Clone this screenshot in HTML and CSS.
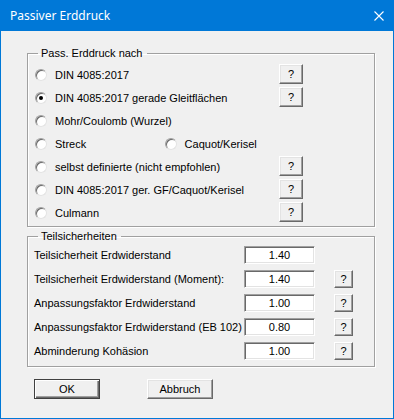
FILE: index.html
```html
<!DOCTYPE html>
<html lang="de">
<head>
<meta charset="utf-8">
<title>Passiver Erddruck</title>
<link rel="stylesheet" href="styles.css">
</head>
<body>
<div class="window">
  <div class="titlebar">
    <span class="title">Passiver Erddruck</span>
    <svg class="close" width="10" height="10" viewBox="0 0 10 10"><path d="M0.5 0.5L9.5 9.5M9.5 0.5L0.5 9.5" stroke="#fff" stroke-width="1.1" fill="none"/></svg>
  </div>
  <div class="client">
    <fieldset class="group g1">
      <legend class="legend">Pass. Erddruck nach</legend>
      <div class="row"><span class="opt"><span class="radio"></span>DIN 4085:2017</span><span class="btn q">?</span></div>
      <div class="row"><span class="opt"><span class="radio on"></span>DIN 4085:2017 gerade Gleitflächen</span><span class="btn q">?</span></div>
      <div class="row"><span class="opt"><span class="radio"></span>Mohr/Coulomb (Wurzel)</span></div>
      <div class="row"><span class="opt half"><span class="radio"></span>Streck</span><span class="opt"><span class="radio"></span>Caquot/Kerisel</span></div>
      <div class="row"><span class="opt"><span class="radio"></span>selbst definierte (nicht empfohlen)</span><span class="btn q">?</span></div>
      <div class="row"><span class="opt"><span class="radio"></span>DIN 4085:2017 ger. GF/Caquot/Kerisel</span><span class="btn q">?</span></div>
      <div class="row"><span class="opt"><span class="radio"></span>Culmann</span><span class="btn q">?</span></div>
    </fieldset>
    <fieldset class="group g2">
      <legend class="legend">Teilsicherheiten</legend>
      <div class="frow"><span class="lbl">Teilsicherheit Erdwiderstand</span><span class="field">1.40</span></div>
      <div class="frow"><span class="lbl">Teilsicherheit Erdwiderstand (Moment):</span><span class="field">1.40</span><span class="btn q2">?</span></div>
      <div class="frow"><span class="lbl">Anpassungsfaktor Erdwiderstand</span><span class="field">1.00</span><span class="btn q2">?</span></div>
      <div class="frow"><span class="lbl">Anpassungsfaktor Erdwiderstand (EB 102)</span><span class="field">0.80</span><span class="btn q2">?</span></div>
      <div class="frow"><span class="lbl">Abminderung Kohäsion</span><span class="field">1.00</span><span class="btn q2">?</span></div>
    </fieldset>
    <div class="actions">
      <span class="btn big default">OK</span>
      <span class="btn big">Abbruch</span>
    </div>
  </div>
</div>
</body>
</html>
```
FILE: styles.css
```css
* { box-sizing: border-box; }
html, body { margin: 0; padding: 0; background: #f0f0f0; }
body {
  font-family: "Liberation Sans", Arial, sans-serif;
  font-size: 11px;
  color: #000;
}
.window {
  width: 394px;
  height: 419px;
  border: 1px solid #0078d7;
  border-top: none;
  background: #f0f0f0;
  display: flex;
  flex-direction: column;
}
.titlebar {
  height: 31px;
  background: #0078d7;
  margin: 0 -1px;
  padding: 0 10px 0 10px;
  display: flex;
  align-items: center;
  justify-content: space-between;
}
.title {
  color: #fff;
  font-family: "Noto Sans", "Open Sans", sans-serif;
  font-size: 12px;
  margin-top: -1px;
}
.close { display: block; margin-top: 0; }
.client {
  padding: 16px 0 0 26px;
  display: flex;
  flex-direction: column;
}
.group {
  width: 348px;
  margin: 0;
  border: 1px solid #a0a0a0;
  box-shadow: inset 1px 1px #fff, 1px 1px #fff;
  min-width: 0;
}
.legend {
  padding: 0 4px 0 3px;
  line-height: 13px;
  height: 13px;
}
.g1 { padding: 3px 0 2px 7px; }
.g1 .legend { margin-left: 3px; }
.g2 { padding: 0 0 3px 6px; margin-top: 3px; }
.g2 .legend { margin-left: 4px; }
.row {
  height: 23px;
  display: flex;
  align-items: center;
}
.opt {
  display: flex;
  align-items: center;
  width: 244px;
}
.opt.half { width: 151px; }
.radio {
  width: 12px;
  height: 12px;
  border-radius: 50%;
  background: #fff;
  border: 1px solid;
  border-color: #a0a0a0 #e3e3e3 #e3e3e3 #a0a0a0;
  box-shadow: inset 1px 1px #696969;
  margin-right: 8px;
  position: relative;
  flex: none;
}
.radio.on::after {
  content: "";
  position: absolute;
  left: 3px;
  top: 3px;
  width: 4px;
  height: 4px;
  border-radius: 50%;
  background: #000;
}
.btn {
  display: flex;
  align-items: center;
  justify-content: center;
  background: #f0f0f0;
  border: 1px solid;
  border-color: #fff #696969 #696969 #fff;
  box-shadow: inset -1px -1px #a0a0a0, inset 1px 1px #e3e3e3;
  flex: none;
}
.q { width: 24px; height: 20px; margin-top: -1px; }
.frow {
  height: 24px;
  display: flex;
  align-items: center;
}
.lbl { width: 210px; }
.field {
  width: 71px;
  height: 18px;
  background: #fff;
  border: 1px solid;
  border-color: #a0a0a0 #fff #fff #a0a0a0;
  box-shadow: inset 1px 1px #696969, inset -1px -1px #e3e3e3;
  display: flex;
  align-items: center;
  justify-content: center;
}
.q2 { width: 19px; height: 18px; margin-left: 19px; }
.actions {
  display: flex;
  margin-top: 12px;
  padding-left: 7px;
  gap: 47px;
}
.big { width: 66px; height: 20px; }
.default {
  border: 1px solid #404040;
  box-shadow: inset 1px 1px #fff, inset -1px -1px #696969, inset -2px -2px #a0a0a0;
}
```
